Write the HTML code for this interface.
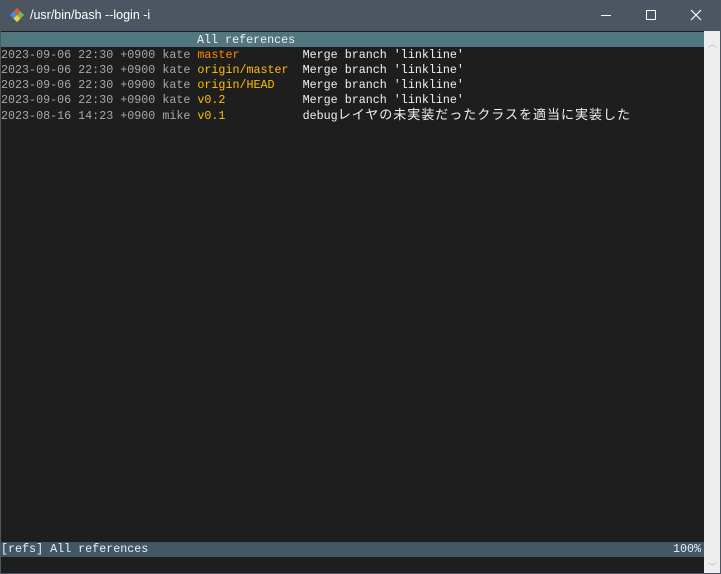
<!DOCTYPE html>
<html><head><style>
*{margin:0;padding:0}
body{width:721px;height:574px;background:#4b5662;position:relative;overflow:hidden;font-family:"Liberation Sans",sans-serif}
.title{position:absolute;left:30px;top:8px;color:#fff;font-size:12.5px}
.term{position:absolute;left:1px;top:31px;width:703px;height:542px;background:#1e1e1e}
.sb{position:absolute;left:704px;top:31px;width:16px;height:542px;background:#eeeeee}
.row{position:absolute;left:0;height:15px;line-height:15px;white-space:pre;font-family:"Liberation Mono","Noto Sans CJK JP",monospace;font-size:11.7px;color:#c8c8c8;overflow:visible}
.g{color:#a8a8a8}.o{color:#ff8a00}.y{color:#ffc000}.w{color:#f0f0f0}
.cj{font-size:13px;letter-spacing:1px;line-height:15px}
</style></head><body>
<svg style="position:absolute;left:9px;top:7px" width="16" height="16" viewBox="0 0 16 16">
<rect x="3" y="3" width="5" height="5" fill="#e94e3c" transform="rotate(45 8 8)"/>
<rect x="8" y="3" width="5" height="5" fill="#6ac14a" transform="rotate(45 8 8)"/>
<rect x="3" y="8" width="5" height="5" fill="#3f8ee8" transform="rotate(45 8 8)"/>
<rect x="8" y="8" width="5" height="5" fill="#f4d03f" transform="rotate(45 8 8)"/>
</svg>
<div class="title">/usr/bin/bash --login -i</div>
<div style="position:absolute;left:601px;top:15px;width:10px;height:1px;background:#fff"></div>
<div style="position:absolute;left:646px;top:10px;width:8px;height:8px;border:1px solid #fff"></div>
<svg style="position:absolute;left:690px;top:9px" width="12" height="12"><path d="M1 1L11 11M11 1L1 11" stroke="#fff" stroke-width="1.2"/></svg>
<div class="term">
<div style="position:absolute;left:0;top:1px;width:703px;height:15px;background:#527680"></div>
<div class="row w" style="top:2px;left:196px">All references</div>
<div class="row" style="top:17px"><span class="g">2023-09-06 22:30 +0900 kate </span><span class="o">master</span>         <span class="w">Merge branch 'linkline'</span></div>
<div class="row" style="top:32px"><span class="g">2023-09-06 22:30 +0900 kate </span><span class="y">origin/master</span>  <span class="w">Merge branch 'linkline'</span></div>
<div class="row" style="top:47px"><span class="g">2023-09-06 22:30 +0900 kate </span><span class="y">origin/HEAD</span>    <span class="w">Merge branch 'linkline'</span></div>
<div class="row" style="top:62px"><span class="g">2023-09-06 22:30 +0900 kate </span><span class="y">v0.2</span>           <span class="w">Merge branch 'linkline'</span></div>
<div class="row" style="top:77px"><span class="g">2023-08-16 14:23 +0900 mike </span><span class="y">v0.1</span>           <span class="w">debug<span class="cj">レイヤの未実装だったクラスを適当に実装した</span></span></div>
<div style="position:absolute;left:0;top:511px;width:703px;height:15px;background:#425664"></div>
<div class="row w" style="top:511px">[refs] All references</div>
<div class="row w" style="top:511px;left:672px">100%</div>
</div>
<div class="sb"></div>
<div style="position:absolute;left:708px;top:37px;color:#bbb;font-size:9px">︿</div>
<div style="position:absolute;left:708px;top:560px;color:#bbb;font-size:9px">﹀</div>
</body></html>
